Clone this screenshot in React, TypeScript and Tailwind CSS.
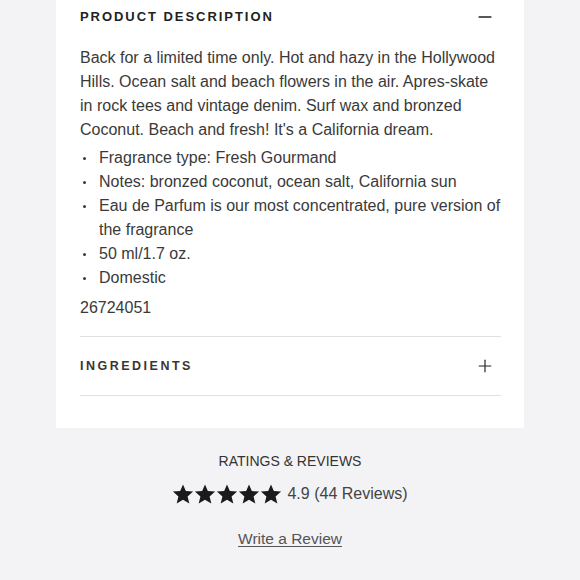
import { Minus, Plus } from "lucide-react"

const bullets = [
  "Fragrance type: Fresh Gourmand",
  "Notes: bronzed coconut, ocean salt, California sun",
  "Eau de Parfum is our most concentrated, pure version of the fragrance",
  "50 ml/1.7 oz.",
  "Domestic",
]

function Star() {
  return (
    <svg viewBox="0 0 24 24" className="h-[22px] w-[22px]" fill="#1a1a1a">
      <path d="M12 1.5l3.1 7.3 7.9.6-6 5.2 1.9 7.8L12 18.3l-6.9 4.1L7 14.6l-6-5.2 7.9-.6z" />
    </svg>
  )
}

export default function App() {
  return (
    <div className="min-h-[580px] w-[580px] overflow-hidden bg-[#f3f3f5] font-['Liberation_Sans',Arial,sans-serif] text-[#3a3a3a]">
      {/* Description card */}
      <div className="mx-[56px] bg-white pb-8 pl-6 pr-[22px]">
        <div className="flex h-[34px] items-center justify-between">
          <h2 className="text-[13px] font-bold uppercase tracking-[0.15em] text-[#222]">
            Product Description
          </h2>
          <Minus className="mr-[7px] h-5 w-5 text-[#222]" strokeWidth={1.9} />
        </div>

        <p className="mt-3 text-[16px] leading-6">
          Back for a limited time only. Hot and hazy in the Hollywood Hills. Ocean salt and beach
          flowers in the air. Apres-skate in rock tees and vintage denim. Surf wax and bronzed
          Coconut. Beach and fresh! It's a California dream.
        </p>

        <ul className="mt-1 text-[16px] leading-6">
          {bullets.map((b) => (
            <li key={b} className="flex">
              <span className="flex h-6 w-[19px] shrink-0 items-center pl-[3px]">
                <span className="h-[3px] w-[3px] rounded-full bg-[#3a3a3a]" />
              </span>
              <span>{b}</span>
            </li>
          ))}
        </ul>

        <p className="mt-1.5 text-[16px] leading-6">26724051</p>

        <div className="mr-[1px] mt-4 flex h-[60px] items-center justify-between border-y border-[#e2e0df]">
          <h2 className="text-[12.5px] font-bold uppercase tracking-[0.2em] text-[#3a3437]">
            Ingredients
          </h2>
          <Plus className="mr-[6px] h-5 w-5 text-[#222]" strokeWidth={1.4} />
        </div>
      </div>

      {/* Ratings */}
      <div className="flex flex-col items-center pt-[23px]">
        <h3 className="text-[14px] uppercase leading-5 text-[#333]">Ratings &amp; Reviews</h3>
        <div className="mt-[11px] flex items-center">
          <div className="flex">
            <Star />
            <Star />
            <Star />
            <Star />
            <Star />
          </div>
          <span className="ml-[5px] text-[16px] text-[#444]">4.9 (44 Reviews)</span>
        </div>
        <a href="#" className="mt-[21px] text-[15.5px] text-[#555] underline underline-offset-2">
          Write a Review
        </a>
      </div>
    </div>
  )
}
